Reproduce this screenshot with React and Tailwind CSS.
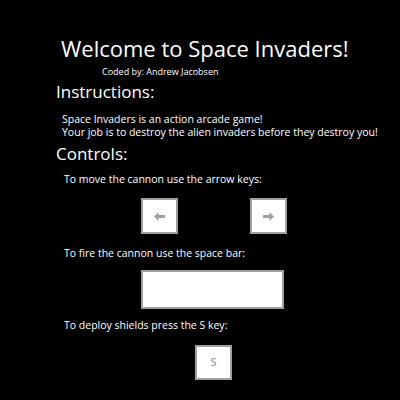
function Key({ children, className = '' }) {
  return (
    <div
      className={`flex items-center justify-center bg-white border-2 border-[#a0a0a0] text-[#a0a0a0] ${className}`}
    >
      {children}
    </div>
  )
}

function Arrow({ flip }) {
  return (
    <svg width="11" height="9" viewBox="0 0 11 9" className={flip ? 'scale-x-[-1]' : ''}>
      <path d="M0 4.5 L4.5 0 L4.5 3 L11 3 L11 6 L4.5 6 L4.5 9 Z" fill="currentColor" />
    </svg>
  )
}

export default function App() {
  return (
    <div className="w-[400px] h-[400px] bg-black text-white overflow-hidden font-['Open_Sans',sans-serif]">
      <h1 className="pt-[34px] pl-[61px] text-[22px] leading-[28px] whitespace-nowrap">
        Welcome to Space Invaders!
      </h1>
      <p className="pl-[102px] mt-[4px] text-[9px] leading-[12px]">Coded by: Andrew Jacobsen</p>

      <h2 className="pl-[56px] mt-[3px] text-[17px] leading-[22px]">Instructions:</h2>
      <div className="pl-[62px] mt-[10px] text-[10.5px] leading-[13px] whitespace-nowrap">
        <p>Space Invaders is an action arcade game!</p>
        <p>Your job is to destroy the alien invaders before they destroy you!</p>
      </div>

      <h2 className="pl-[56px] mt-[4px] text-[17px] leading-[22px]">Controls:</h2>

      <p className="pl-[64px] mt-[8px] text-[10.5px] leading-[13px]">
        To move the cannon use the arrow keys:
      </p>
      <div className="flex pl-[141px] gap-[72px] mt-[12px]">
        <Key className="w-[37px] h-[36px]">
          <Arrow />
        </Key>
        <Key className="w-[37px] h-[36px]">
          <Arrow flip />
        </Key>
      </div>

      <p className="pl-[64px] mt-[13px] text-[10.5px] leading-[13px]">
        To fire the cannon use the space bar:
      </p>
      <div className="pl-[141px] mt-[10px]">
        <Key className="w-[143px] h-[39px]" />
      </div>

      <p className="pl-[64px] mt-[10px] text-[10.5px] leading-[13px]">
        To deploy shields press the S key:
      </p>
      <div className="pl-[195px] mt-[13px]">
        <Key className="w-[37px] h-[35px] text-[11px] font-semibold">S</Key>
      </div>
    </div>
  )
}
